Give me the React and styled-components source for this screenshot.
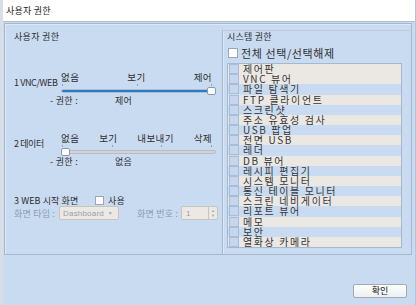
import React from 'react'
import styled, { createGlobalStyle } from 'styled-components'

const GlobalStyle = createGlobalStyle`
  html, body {
    margin: 0;
    padding: 0;
    width: 416px;
    height: 305px;
    overflow: hidden;
    background: #c9dbf1;
  }
  * { box-sizing: border-box; }
  #root {
    font-family: "Noto Sans CJK KR", "Noto Sans", sans-serif;
    color: #2e2e2e;
  }
`

const systemItems = [
  '제어판', 'VNC 뷰어', '파일 탐색기', 'FTP 클라이언트', '스크린샷', '주소 유효성 검사',
  'USB 팝업', '전면 USB', '레더', 'DB 뷰어', '레시피 편집기', '시스템 모니터',
  '통신 테이블 모니터', '스크린 네비게이터', '리포트 뷰어', '메모', '보안', '열화상 카메라',
]

const Window = styled.div`
  width: 416px;
  height: 305px;
  display: flex;
  flex-direction: column;
  border-left: 3px solid #d9dee5;
  border-right: 1px solid #b7c4d4;
`

const TitleBar = styled.div`
  height: 22px;
  flex: none;
  background: #ffffff;
  border-bottom: 1px solid #aebfd4;
  display: flex;
  align-items: center;
  padding-left: 3px;
  font-size: 9px;
  letter-spacing: 0.2px;
  color: #222;
`

const Body = styled.div`
  flex: 1;
  display: flex;
  flex-direction: column;
  padding: 1px 3px 0 1px;
  background: #c9dbf1;
`

const MainPanel = styled.div`
  height: 232px;
  flex: none;
  display: flex;
  border: 1px solid #a6b8ce;
  box-shadow: inset 1px 1px 0 #dce7f5;
`

const LeftColumn = styled.div`
  width: 217px;
  flex: none;
  padding: 7px 0 0 9px;
  display: flex;
  flex-direction: column;
`

const Heading = styled.div`
  font-size: 9px;
  line-height: 12px;
  letter-spacing: 0.3px;
`

const PermRow = styled.div`
  display: flex;
  margin-top: ${(p) => p.$gap}px;
`

const RowName = styled.div`
  width: 47px;
  flex: none;
  padding-top: 6px;
  font-size: 9px;
  line-height: 12px;
  letter-spacing: -0.4px;
  white-space: nowrap;
`

const SliderBox = styled.div`
  width: 155px;
  display: flex;
  flex-direction: column;
`

const TickLabels = styled.div`
  display: flex;
  justify-content: space-between;
  height: 12px;
  font-size: 9.5px;
  line-height: 12px;
  letter-spacing: 0.4px;
  padding-right: 4px;
`

const Ticks = styled.div`
  height: 3px;
  display: flex;
  justify-content: space-between;
  padding: 1px 4px 0 1px;
`

const Tick = styled.span`
  width: 1px;
  height: 2px;
  background: #9aa3ad;
`

const TrackArea = styled.div`
  position: relative;
  height: 10px;
  display: flex;
  align-items: center;
`

const Track = styled.div`
  width: 100%;
  height: 4px;
  border-radius: 2px;
  background: #cfd3d8;
  border: 1px solid #b8bdc3;
  overflow: hidden;
`

const TrackFill = styled.div`
  height: 100%;
  background: #1f7dd6;
`

const Thumb = styled.div`
  position: absolute;
  top: 1px;
  width: 9px;
  height: 8px;
  border-radius: 2px;
  background: #ffffff;
  border: 1px solid #8e99a6;
`

const StatusRow = styled.div`
  display: flex;
  height: 10px;
  padding-left: 36px;
  font-size: 9px;
  line-height: 10px;
  letter-spacing: 0.3px;
`

const StatusLabel = styled.span`
  width: 65px;
  flex: none;
`

const StartRow = styled.div`
  display: flex;
  align-items: center;
  height: 12px;
  margin-top: 27px;
  font-size: 9px;
  letter-spacing: 0.1px;
`

const StartName = styled.span`
  width: 81px;
  flex: none;
`

const Check = styled.span`
  width: ${(p) => p.$size || 9}px;
  height: ${(p) => p.$size || 9}px;
  flex: none;
  background: #ffffff;
  border: 1px solid #9aa6b4;
  margin-right: ${(p) => p.$space || 4}px;
`

const ScreenRow = styled.div`
  display: flex;
  align-items: center;
  height: 14px;
  font-size: 9px;
  color: #8b9bb0;
  letter-spacing: 0.2px;
`

const FieldLabel = styled.span`
  width: ${(p) => p.$w}px;
  flex: none;
`

const Combo = styled.div`
  width: 60px;
  height: 14px;
  display: flex;
  align-items: center;
  justify-content: space-between;
  padding: 0 5px 0 3px;
  background: #ece9e4;
  border: 1px solid #c9c4bc;
  border-radius: 2px;
  font-family: "Liberation Sans", sans-serif;
  font-size: 8px;
  color: #9aa0a8;
  margin-right: 18px;
`

const ComboArrow = styled.span`
  font-size: 5px;
  color: #a4a9b0;
`

const Spin = styled.div`
  width: 37px;
  height: 14px;
  display: flex;
  align-items: stretch;
  background: #ece9e4;
  border: 1px solid #c9c4bc;
  border-radius: 2px;
  font-family: "Liberation Sans", sans-serif;
  font-size: 8px;
  color: #9aa0a8;
`

const SpinValue = styled.span`
  flex: 1;
  padding-left: 4px;
  display: flex;
  align-items: center;
`

const SpinButtons = styled.span`
  width: 9px;
  border-left: 1px solid #c9c4bc;
  display: flex;
  flex-direction: column;
  align-items: center;
  justify-content: center;
  font-size: 4px;
  line-height: 5px;
  color: #a4a9b0;
`

const GroupBox = styled.div`
  flex: 1;
  margin-top: 6px;
  border-left: 1px solid #a6b8ce;
  border-top: 1px solid #bccbdc;
  box-shadow: inset 1px 0 0 #dce7f5;
  padding: 0 0 6px 4px;
  display: flex;
  flex-direction: column;
`

const GroupTitle = styled.div`
  font-size: 9px;
  line-height: 12px;
  letter-spacing: 0.2px;
`

const SelectAll = styled.div`
  display: flex;
  align-items: center;
  height: 12px;
  margin-top: 4px;
  padding-left: 1px;
  font-size: 11px;
  letter-spacing: 0.6px;
`

const List = styled.div`
  width: 175px;
  height: 185px;
  flex: none;
  margin-top: 4px;
  border: 1px solid #a6b8ce;
  background: #c9dbf1;
  display: flex;
  flex-direction: column;
`

const ListRow = styled.div`
  flex: 1;
  display: flex;
  align-items: center;
  background: ${(p) => (p.$shade ? '#ebe8e3' : '#c9dbf1')};
  font-size: 10px;
  line-height: 10px;
  letter-spacing: 1.6px;
  color: #363636;
  white-space: nowrap;
`

const RowBox = styled.span`
  width: 10px;
  height: 10px;
  flex: none;
  margin: 0 4px 0 1px;
  background: #c4d7ee;
  border: 1px solid #aabdd5;
`

const Footer = styled.div`
  flex: 1;
  display: flex;
  justify-content: flex-end;
  align-items: flex-end;
  padding: 0 5px 7px 0;
`

const Button = styled.button`
  width: 54px;
  height: 14px;
  padding: 0;
  border: 1px solid #a1aab6;
  border-radius: 2px;
  background: linear-gradient(#ffffff, #eceef1);
  font-family: "Noto Sans CJK KR", sans-serif;
  font-size: 9px;
  line-height: 12px;
  color: #222;
`

const Slider = ({ labels, value }) => {
  const pct = (value / (labels.length - 1)) * 100
  return (
    <SliderBox>
      <TickLabels>
        {labels.map((l) => <span key={l}>{l}</span>)}
      </TickLabels>
      <Ticks>
        {labels.map((l) => <Tick key={l} />)}
      </Ticks>
      <TrackArea>
        <Track>
          <TrackFill style={{ width: `${pct}%` }} />
        </Track>
        <Thumb style={{ left: `calc(${pct / 100} * (100% - 9px))` }} />
      </TrackArea>
    </SliderBox>
  )
}

const App = () => {
  return (
    <>
      <GlobalStyle />
      <Window>
        <TitleBar>사용자 권한</TitleBar>
        <Body>
          <MainPanel>
            <LeftColumn>
              <Heading>사용자 권한</Heading>

              <PermRow $gap={28}>
                <RowName>1 VNC/WEB</RowName>
                <Slider labels={['없음', '보기', '제어']} value={2} />
              </PermRow>
              <StatusRow>
                <StatusLabel>- 권한 :</StatusLabel>
                <span>제어</span>
              </StatusRow>

              <PermRow $gap={26}>
                <RowName>2 데이터</RowName>
                <Slider labels={['없음', '보기', '내보내기', '삭제']} value={0} />
              </PermRow>
              <StatusRow>
                <StatusLabel>- 권한 :</StatusLabel>
                <span>없음</span>
              </StatusRow>

              <StartRow>
                <StartName>3 WEB 시작 화면</StartName>
                <Check />
                <span>사용</span>
              </StartRow>
              <ScreenRow>
                <FieldLabel $w={45}>화면 타입 :</FieldLabel>
                <Combo>
                  <span>Dashboard</span>
                  <ComboArrow>▼</ComboArrow>
                </Combo>
                <FieldLabel $w={44}>화면 번호 :</FieldLabel>
                <Spin>
                  <SpinValue>1</SpinValue>
                  <SpinButtons>
                    <span>▲</span>
                    <span>▼</span>
                  </SpinButtons>
                </Spin>
              </ScreenRow>
            </LeftColumn>

            <GroupBox>
              <GroupTitle>시스템 권한</GroupTitle>
              <SelectAll>
                <Check $size={10} $space={3} />
                <span>전체 선택/선택해제</span>
              </SelectAll>
              <List>
                {systemItems.map((item, i) => (
                  <ListRow key={item} $shade={i === 0 || i % 2 === 1}>
                    <RowBox />
                    {item}
                  </ListRow>
                ))}
              </List>
            </GroupBox>
          </MainPanel>
          <Footer>
            <Button>확인</Button>
          </Footer>
        </Body>
      </Window>
    </>
  )
}

export default App
